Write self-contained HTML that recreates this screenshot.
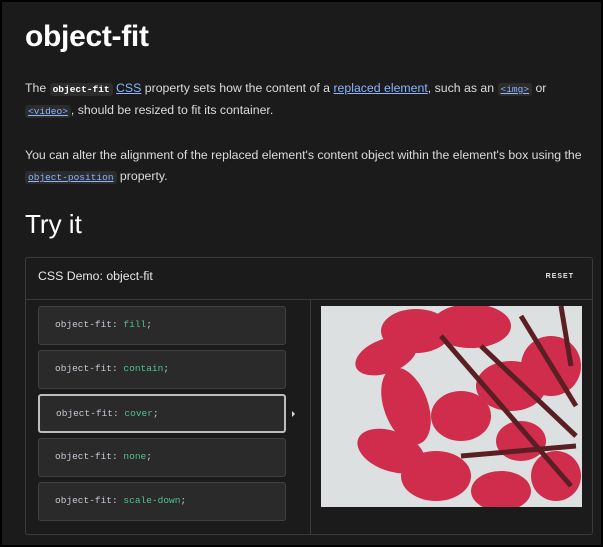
<!DOCTYPE html>
<html><head><meta charset="utf-8"><style>
*{margin:0;padding:0;box-sizing:border-box}
body{width:603px;height:547px;background:#000;overflow:hidden;font-family:"Liberation Sans",sans-serif}
.page{position:absolute;left:2px;top:2px;width:599px;height:543px;background:#1b1b1b;color:#e6e6e6}
h1{position:absolute;left:23px;top:18px;font-size:30px;font-weight:bold;color:#fff;letter-spacing:-0.3px}
p{position:absolute;left:23px;font-size:12.3px;line-height:21px;color:#dcdcdc;width:570px}
code{font-family:"Liberation Mono",monospace;font-size:9.5px;background:#2c2c2c;padding:1px 3px;border-radius:3px}
a,.lc{color:#8cb4ff;text-decoration:underline}
h2{position:absolute;left:23px;top:207px;font-size:26px;font-weight:normal;color:#fff}
.demo{position:absolute;left:23px;top:255px;width:568px;height:278px;border:1px solid #3a3a3a;border-radius:3px;background:#1b1b1b}
.hdr{height:42px;border-bottom:1px solid #3a3a3a;font-size:12.3px;color:#e8e8e8;padding:11px 0 0 12px;position:relative}
.reset{position:absolute;right:18px;top:15px;font-size:7px;font-weight:bold;letter-spacing:1px}
.div{position:absolute;left:284px;top:42px;bottom:0;border-left:1px solid #3a3a3a}
.btn{position:absolute;left:12px;width:248px;height:39px;background:#2a2a2a;border:1px solid #404040;border-radius:3px;font-family:"Liberation Mono",monospace;font-size:9.5px;color:#c9c9d6;padding:12px 0 0 16px}
.btn span{color:#4fc38d}
.sel{border:2px solid #bdbdbd}
.img{position:absolute;left:295px;top:48px;width:261px;height:201px;background:#dde0e1;overflow:hidden}
</style></head><body><div class="page">
<h1>object-fit</h1>
<p style="top:76px">The <code style="font-weight:bold;color:#fff">object-fit</code> <a>CSS</a> property sets how the content of a <a>replaced element</a>, such as an <code class="lc">&lt;img&gt;</code> or <code class="lc">&lt;video&gt;</code>, should be resized to fit its container.</p>
<p style="top:143px">You can alter the alignment of the replaced element's content object within the element's box using the <code class="lc">object-position</code> property.</p>
<h2>Try it</h2>
<div class="demo">
<div class="hdr">CSS Demo: object-fit<span class="reset">RESET</span></div>
<div class="div"></div>
<div class="btn" style="top:48px">object-fit: <span>fill</span>;</div>
<div class="btn" style="top:92px">object-fit: <span>contain</span>;</div>
<div class="btn sel" style="top:136px">object-fit: <span>cover</span>;</div>
<div class="btn" style="top:180px">object-fit: <span>none</span>;</div>
<div class="btn" style="top:224px">object-fit: <span>scale-down</span>;</div>
<div style="position:absolute;left:266px;top:153px;width:0;height:0;border-left:3px solid #ddd;border-top:3px solid transparent;border-bottom:3px solid transparent"></div>
<div class="img"><svg width="261" height="201" viewBox="0 0 261 201">
<g fill="#d02c4c">
<ellipse cx="65" cy="50" rx="32" ry="17" transform="rotate(-20 65 50)"/>
<ellipse cx="95" cy="25" rx="35" ry="22"/>
<ellipse cx="150" cy="20" rx="40" ry="22"/>
<ellipse cx="85" cy="100" rx="22" ry="40" transform="rotate(-20 85 100)"/>
<ellipse cx="70" cy="145" rx="35" ry="20" transform="rotate(20 70 145)"/>
<ellipse cx="115" cy="170" rx="35" ry="25"/>
<ellipse cx="140" cy="110" rx="30" ry="25"/>
<ellipse cx="190" cy="80" rx="35" ry="25"/>
<ellipse cx="230" cy="60" rx="30" ry="30"/>
<ellipse cx="180" cy="185" rx="30" ry="20"/>
<ellipse cx="235" cy="170" rx="25" ry="25"/>
<ellipse cx="200" cy="135" rx="25" ry="20"/>
</g>
<g stroke="#5a1f22" stroke-width="5" fill="none">
<path d="M120 30 L250 180"/><path d="M160 40 L255 130"/><path d="M200 10 L255 100"/><path d="M140 150 L255 140"/><path d="M240 0 L250 60"/>
</g>
</svg></div>
</div>
</div></body></html>
